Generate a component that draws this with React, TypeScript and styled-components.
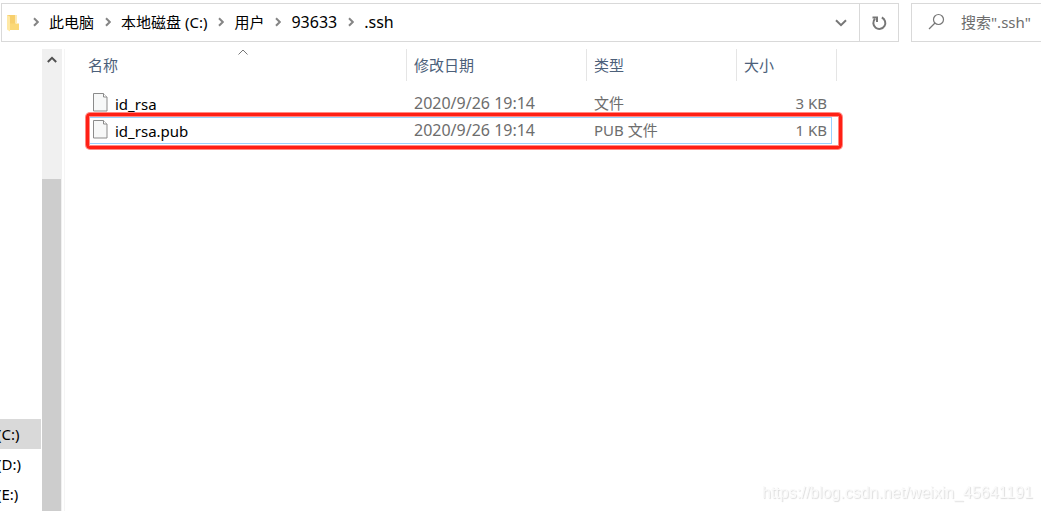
import React from "react";
import styled, { createGlobalStyle } from "styled-components";

const GlobalStyle = createGlobalStyle`
  * { box-sizing: border-box; }
  body {
    margin: 0;
    background: #fff;
    color: #000;
    font: 15px/20px "Noto Sans", "Noto Sans CJK SC", sans-serif;
    overflow: hidden;
  }
  button, input { font: inherit; }
`;

const Window = styled.div`
  display: flex;
  flex-direction: column;
  height: 100vh;
`;

const Toolbar = styled.header`
  display: flex;
  flex: none;
  gap: 12px;
  height: 39px;
  margin: 3px 0 0 1px;
`;

const AddressBar = styled.div`
  display: flex;
  flex: 1;
  align-items: stretch;
  border: 1px solid #d9d9d9;
`;

const Breadcrumbs = styled.nav`
  display: flex;
  flex: 1;
  align-items: center;
  padding-left: 5px;
`;

const Crumb = styled.a<{ $latin?: boolean }>`
  padding-bottom: 2px;
  color: #000;
  font-size: ${(p) => (p.$latin ? 16 : 15)}px;
  text-decoration: none;
  white-space: nowrap;
`;

const Separator = styled.svg`
  flex: none;
  width: 6px;
  height: 10px;
  margin: 0 10px 2px 11px;
`;

const IconButton = styled.button<{ $divided?: boolean }>`
  display: flex;
  align-items: center;
  justify-content: center;
  width: ${(p) => (p.$divided ? 39 : 36)}px;
  padding: 0;
  border: 0;
  border-left: ${(p) => (p.$divided ? "1px solid #d9d9d9" : "0")};
  background: none;
`;

const SearchBox = styled.label`
  display: flex;
  align-items: center;
  width: 130px;
  gap: 16px;
  padding-left: 16px;
  padding-bottom: 2px;
  border: 1px solid #d9d9d9;
  border-right: 0;
  svg { flex: none; }
`;

const SearchInput = styled.input`
  flex: 1;
  min-width: 0;
  padding: 0;
  border: 0;
  outline: 0;
  background: none;
  &::placeholder { color: #6d6d6d; opacity: 1; }
`;

const Body = styled.div`
  display: flex;
  flex: 1;
  min-height: 0;
  padding-top: 7px;
`;

const Sidebar = styled.nav`
  display: flex;
  flex-direction: column;
  justify-content: flex-end;
  width: 42px;
  padding: 0 1px 2px 0;
  overflow: hidden;
`;

const Drive = styled.a<{ $selected?: boolean }>`
  height: 30px;
  line-height: 30px;
  text-indent: -3px;
  color: #000;
  text-decoration: none;
  background: ${(p) => (p.$selected ? "#d9d9d9" : "none")};
`;

const ScrollTrack = styled.div`
  display: flex;
  flex-direction: column;
  width: 20px;
  background: #f0f0f0;
`;

const ScrollUp = styled.button`
  display: flex;
  justify-content: center;
  height: 130px;
  padding: 7px 0 0;
  border: 0;
  background: none;
`;

const ScrollThumb = styled.div`
  flex: 1;
  width: 19px;
  background: #cdcdcd;
`;

const Content = styled.main`
  flex: 1;
  margin-left: 2px;
  padding-left: 15px;
  border-left: 1px solid #f5f5f5;
`;

const FileTable = styled.table`
  table-layout: fixed;
  width: 757px;
  border-collapse: separate;
  border-spacing: 0;
`;

const HeadCell = styled.th<{ $width: number }>`
  position: relative;
  width: ${(p) => p.$width}px;
  height: 32px;
  padding: 0 0 0 7px;
  border-right: 1px solid #e5e5e5;
  color: #4c607a;
  font-weight: 400;
  text-align: left;
  &:first-child { padding-left: 8px; }
`;

const SortMark = styled.svg`
  position: absolute;
  top: 0;
  left: calc(50% - 5px);
`;

const Gap = styled.tr`
  height: 9px;
`;

const Row = styled.tr`
  position: relative;
  height: 27px;
`;

const Cell = styled.td<{ $size?: boolean; $latin?: boolean }>`
  padding: 0 ${(p) => (p.$size ? 10 : 0)}px 2px ${(p) => (p.$size ? 0 : 7)}px;
  color: #6d6d6d;
  font-size: ${(p) => (p.$latin ? 16 : 15)}px;
  text-align: ${(p) => (p.$size ? "right" : "left")};
  white-space: nowrap;
`;

const NameCell = styled.td`
  padding: 0 0 0 13px;
`;

const FileName = styled.div`
  display: flex;
  gap: 7px;
  height: 22px;
  span { padding-top: 1px; }
`;

const FocusFrame = styled.span`
  position: absolute;
  inset: 0 5px 0 8px;
  border: 1px solid #99d1ff;
`;

const RedFrame = styled.span`
  position: absolute;
  inset: -4px -5px -5px 6px;
  border: 3px solid #ff2015;
  border-radius: 4px;
  box-shadow: 0 0 0 1px #ff8a84, inset 0 0 0 1px #ff8a84;
`;

const Watermark = styled.div`
  position: fixed;
  right: 8px;
  bottom: 8px;
  color: #fafafa;
  font: 16px/20px "Liberation Sans", sans-serif;
  text-shadow: 1px 1px 1px #ddd;
`;

const Chevron = () => (
  <Separator viewBox="0 0 6 10" fill="none" stroke="#858585" strokeWidth="2" aria-hidden>
    <path d="M1 1.2 4.8 5 1 8.8" />
  </Separator>
);

const FolderIcon = () => (
  <svg width="15" height="18" viewBox="0 0 15 18" aria-hidden>
    <path d="M0 1h8.500v14H0z" fill="#f7cf6c" />
    <path d="M3 9.500h9V16H3z" fill="#fbd877" />
    <path d="M8.500 1H10v8H8.500z" fill="#fdebb4" />
    <path d="M0 1l3 1.500v15L0 15.500z" fill="#ffe9a6" />
  </svg>
);

const FileIcon = () => (
  <svg width="15" height="19" viewBox="0 0 15 19" aria-hidden>
    <path d="M.5.5h10l3.500 3.500v14H.5z" fill="#f7f8f8" stroke="#8b8b8b" />
    <path d="M10.500.5v3.500H14" fill="#fff" stroke="#8b8b8b" />
  </svg>
);

const crumbs = [
  { label: "此电脑" },
  { label: "本地磁盘 (C:)" },
  { label: "用户" },
  { label: "93633", latin: true },
  { label: ".ssh", latin: true },
];

const drives = [
  { label: "(C:)", selected: true },
  { label: "(D:)" },
  { label: "(E:)" },
];

const columns = [
  { label: "名称", width: 327, sorted: true },
  { label: "修改日期", width: 180 },
  { label: "类型", width: 150 },
  { label: "大小", width: 100 },
];

const files = [
  { name: "id_rsa", date: "2020/9/26 19:14", type: "文件", size: "3 KB" },
  { name: "id_rsa.pub", date: "2020/9/26 19:14", type: "PUB 文件", size: "1 KB", marked: true },
];

export default function App() {
  return (
    <Window>
      <GlobalStyle />
      <Toolbar>
        <AddressBar>
          <Breadcrumbs>
            <FolderIcon />
            {crumbs.map((c) => (
              <React.Fragment key={c.label}>
                <Chevron />
                <Crumb href="#" $latin={c.latin}>{c.label}</Crumb>
              </React.Fragment>
            ))}
          </Breadcrumbs>
          <IconButton aria-label="历史记录">
            <svg width="12" height="8" viewBox="0 0 12 8" fill="none" stroke="#777" strokeWidth="2">
              <path d="M1 1.200 6 6.200 11 1.200" />
            </svg>
          </IconButton>
          <IconButton $divided aria-label="刷新">
            <svg width="16" height="16" viewBox="0 0 16 16" fill="none" stroke="#777" strokeWidth="2">
              <path d="M10.800 2.500A6 6 0 1 1 4 3.800" />
              <path d="M1.500 2.500H6V7" />
            </svg>
          </IconButton>
        </AddressBar>
        <SearchBox>
          <svg width="17" height="17" viewBox="0 0 17 17" fill="none" stroke="#777" strokeWidth="1.2" aria-hidden>
            <circle cx="10.5" cy="6.5" r="5" />
            <path d="M7 10 1 16" />
          </svg>
          <SearchInput type="text" aria-label="搜索" placeholder={'搜索".ssh"'} />
        </SearchBox>
      </Toolbar>
      <Body>
        <Sidebar>
          {drives.map((d) => (
            <Drive key={d.label} href="#" $selected={d.selected}>
              {d.label}
            </Drive>
          ))}
        </Sidebar>
        <ScrollTrack>
          <ScrollUp aria-label="向上滚动">
            <svg width="10" height="8" viewBox="0 0 10 8" fill="none" stroke="#505050" strokeWidth="2">
              <path d="M.8 6 5 1.800 9.200 6" />
            </svg>
          </ScrollUp>
          <ScrollThumb />
        </ScrollTrack>
        <Content>
          <FileTable>
            <thead>
              <tr>
                {columns.map((c) => (
                  <HeadCell key={c.label} $width={c.width} scope="col">
                    {c.label}
                    {c.sorted && (
                      <SortMark width="10" height="7" viewBox="0 0 10 7" fill="none" stroke="#777">
                        <path d="M.5 5.500 5 1 9.500 5.500" />
                      </SortMark>
                    )}
                  </HeadCell>
                ))}
              </tr>
            </thead>
            <tbody>
              <Gap aria-hidden />
              {files.map((f) => (
                <Row key={f.name}>
                  <NameCell>
                    <FileName>
                      <FileIcon />
                      <span>{f.name}</span>
                    </FileName>
                    {f.marked && <FocusFrame />}
                    {f.marked && <RedFrame />}
                  </NameCell>
                  <Cell $latin>{f.date}</Cell>
                  <Cell>{f.type}</Cell>
                  <Cell $size>{f.size}</Cell>
                </Row>
              ))}
            </tbody>
          </FileTable>
        </Content>
      </Body>
      <Watermark>https://blog.csdn.net/weixin_45641191</Watermark>
    </Window>
  );
}
